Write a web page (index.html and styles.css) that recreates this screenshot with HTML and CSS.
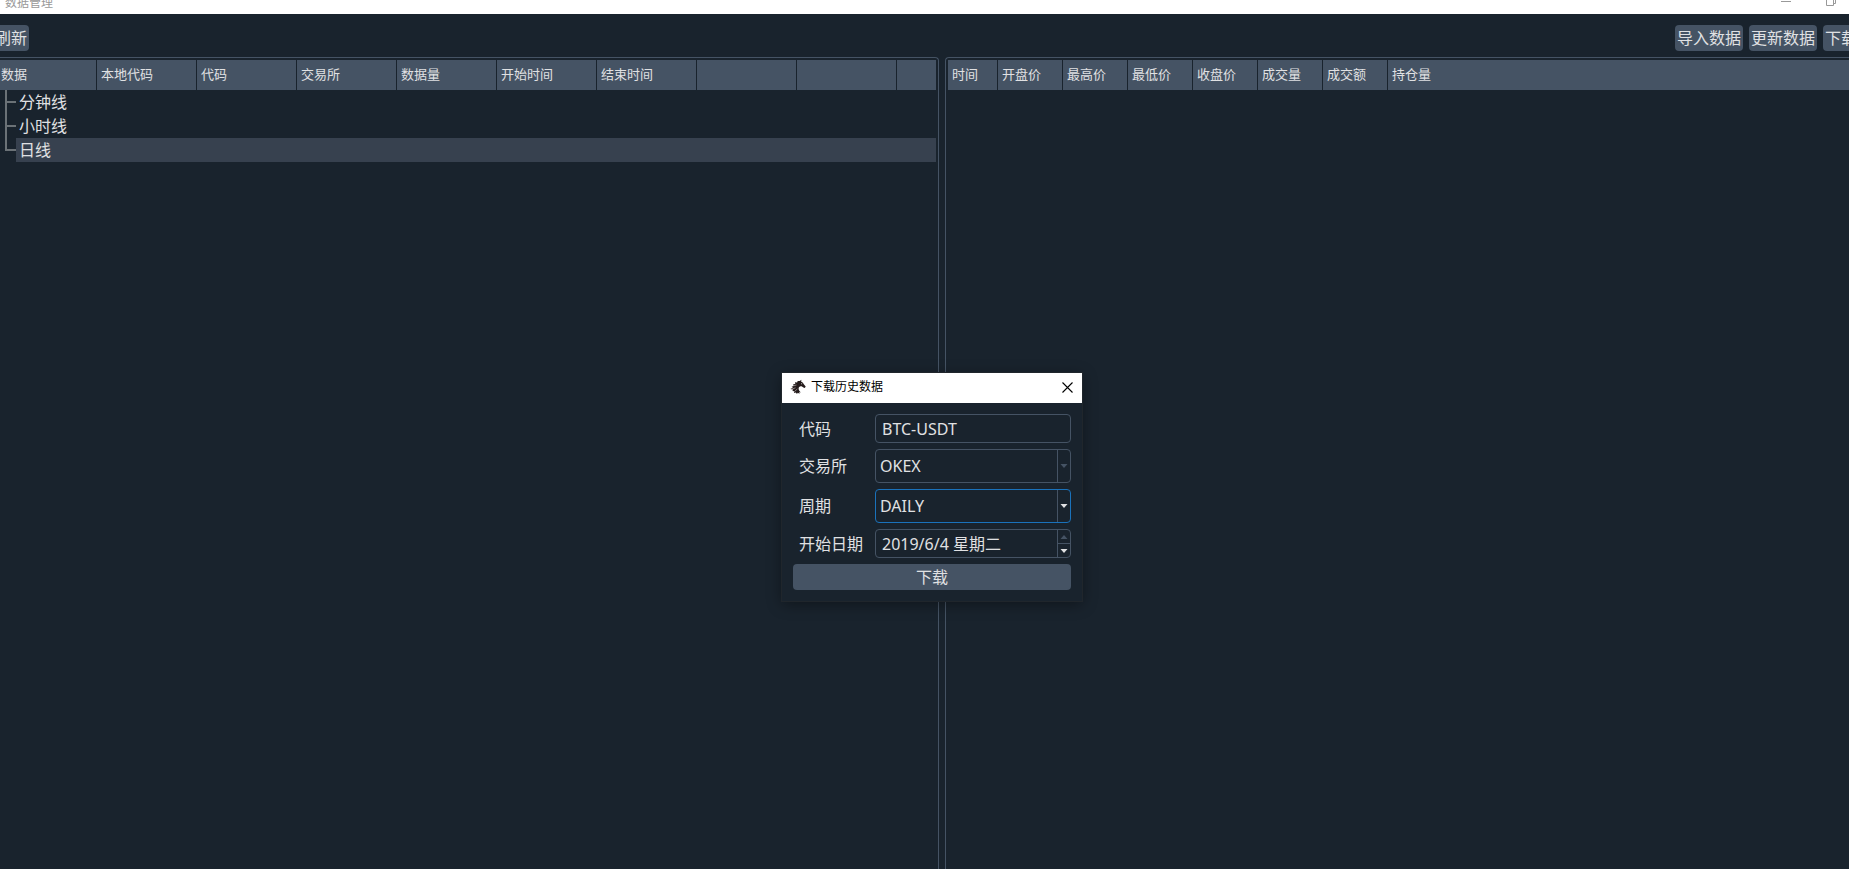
FILE: index.html
```html
<!DOCTYPE html>
<html lang="zh-CN">
<head>
<meta charset="utf-8">
<title>数据管理</title>
<link rel="stylesheet" href="styles.css">
</head>
<body>
<div class="window">
  <header class="titlebar">
    <span class="titlebar-text">数据管理</span>
    <div class="titlebar-controls">
      <button class="caption-btn" aria-label="最小化"><svg width="10" height="10" viewBox="0 0 10 10"><path d="M0 3.5H10" stroke="#999" fill="none"/></svg></button>
      <button class="caption-btn" aria-label="还原"><svg width="10" height="10" viewBox="0 0 10 10"><path d="M.5.5h7v7h-7zM7.500 5.500h2v-6" stroke="#999" fill="none"/></svg></button>
    </div>
  </header>
  <nav class="toolbar">
    <button class="btn">刷新</button>
    <div class="toolbar-group">
      <button class="btn">导入数据</button>
      <button class="btn">更新数据</button>
      <button class="btn">下载数据</button>
    </div>
  </nav>
  <main class="panes">
    <section class="pane pane-tree">
      <table class="grid">
        <colgroup><col class="col-first"><col class="col-tree" span="8"><col></colgroup>
        <thead><tr><th>数据</th><th>本地代码</th><th>代码</th><th>交易所</th><th>数据量</th><th>开始时间</th><th>结束时间</th><th></th><th></th><th></th></tr></thead>
        <tbody>
          <tr><td colspan="10"><div class="node"><svg class="branch" width="16" height="24" viewBox="0 0 16 24"><path d="M6 0V24M6 12H16"/></svg><span class="node-label">分钟线</span></div></td></tr>
          <tr><td colspan="10"><div class="node"><svg class="branch" width="16" height="24" viewBox="0 0 16 24"><path d="M6 0V24M6 12H16"/></svg><span class="node-label">小时线</span></div></td></tr>
          <tr><td colspan="10"><div class="node"><svg class="branch" width="16" height="24" viewBox="0 0 16 24"><path d="M6 0V12H16"/></svg><span class="node-label selected">日线</span></div></td></tr>
        </tbody>
      </table>
    </section>
    <section class="pane pane-bars">
      <table class="grid">
        <colgroup><col class="col-time"><col class="col-bar" span="6"><col></colgroup>
        <thead><tr><th>时间</th><th>开盘价</th><th>最高价</th><th>最低价</th><th>收盘价</th><th>成交量</th><th>成交额</th><th>持仓量</th></tr></thead>
      </table>
    </section>
  </main>
</div>

<div class="dialog" role="dialog" aria-labelledby="dialog-title">
  <div class="dialog-bar">
    <svg class="logo" width="16" height="16" viewBox="0 0 16 16"><path fill="#231a1a" d="M11.500 .8L11 2.400C12.500 3 13.400 4 13.800 5.200L15.700 7.600L14.800 9L13.400 8.600L11.600 7.300C10.400 7.300 9.300 7.700 8.700 8.700C8.200 10.300 9.300 12 11 13.600L9.300 13L9.500 14.700L7.700 13.700L7 15L5.800 13.500L4 14L4.300 12.300L2.300 12L3.300 10.600L.3 10.100L3 8.700L1.600 7.800L3.800 6.900L3.100 5.300L5.300 5.100L5 3.200L7.100 3.500L7.700 1.900L9.700 2.100Z"/><path d="M1.500 10.300L5.500 8.800M4.500 12.500L7.300 10M4 6.700L6.500 6" stroke="#b8aeae" stroke-width=".7"/><circle cx="11.700" cy="4.800" r=".5" fill="#fff"/></svg>
    <h1 class="dialog-title" id="dialog-title">下载历史数据</h1>
    <button class="close" aria-label="关闭"><svg width="11" height="11" viewBox="0 0 11 11"><path d="M.5.5l10 10M10.500.5l-10 10" stroke="#000" stroke-width="1.100" fill="none"/></svg></button>
  </div>
  <form class="form" onsubmit="return false">
    <label for="symbol">代码</label>
    <div class="field"><input class="control" id="symbol" type="text" value="BTC-USDT"></div>
    <label for="exchange">交易所</label>
    <div class="field field-combo">
      <select class="control" id="exchange"><option>OKEX</option></select>
      <span class="drop"><svg class="arrow dim" width="8" height="4" viewBox="0 0 8 4"><path d="M.5 0h7L4 4z"/></svg></span>
    </div>
    <label for="interval">周期</label>
    <div class="field field-combo active">
      <select class="control" id="interval"><option>DAILY</option></select>
      <span class="drop"><svg class="arrow" width="8" height="4" viewBox="0 0 8 4"><path d="M.5 0h7L4 4z"/></svg></span>
    </div>
    <label for="start">开始日期</label>
    <div class="field">
      <input class="control" id="start" type="text" value="2019/6/4 星期二">
      <div class="spin">
        <button type="button" aria-label="增加"><svg class="arrow dim" width="8" height="4" viewBox="0 0 8 4"><path d="M.5 4h7L4 0z"/></svg></button>
        <button type="button" aria-label="减少"><svg class="arrow" width="8" height="4" viewBox="0 0 8 4"><path d="M.5 0h7L4 4z"/></svg></button>
      </div>
    </div>
    <button class="btn submit">下载</button>
  </form>
</div>
</body>
</html>
```

FILE: styles.css
```css
:root {
  --bg: #19232d;
  --line: #455364;
  --text: #e0e1e3;
  --selected: #37414f;
  --accent: #1a72bb;
}

* {
  box-sizing: border-box;
}

body {
  margin: 0;
  overflow: hidden;
  background: var(--bg);
  color: var(--text);
  font: 16px/24px "Noto Sans", "Noto Sans CJK SC", sans-serif;
}

button,
input,
select {
  margin: 0;
  padding: 0;
  border: 0;
  background: none;
  color: inherit;
  font: inherit;
}

svg {
  display: block;
  flex: none;
}

.window {
  display: flex;
  flex-direction: column;
  height: 100vh;
  overflow: hidden;
}

.titlebar {
  display: flex;
  flex: none;
  align-items: center;
  justify-content: space-between;
  height: 22px;
  margin-top: -8px;
  padding-left: 5px;
  background: #fff;
  color: #999;
  font-size: 12px;
}

.titlebar-controls {
  display: flex;
}

.caption-btn {
  display: flex;
  align-items: center;
  width: 45px;
  height: 20px;
}

.caption-btn:last-child {
  width: 23px;
}

.toolbar {
  display: flex;
  flex: none;
  justify-content: space-between;
  padding: 11px 0 6px;
  margin: 0 -42px 0 -7px;
}

.toolbar-group {
  display: flex;
  gap: 6px;
}

.btn {
  height: 26px;
  padding: 0 2px;
  border-radius: 4px;
  background: var(--line);
  line-height: 26px;
  white-space: nowrap;
}

.panes {
  display: flex;
  flex: 1;
  gap: 6px;
}

.pane {
  min-width: 0;
  padding-top: 2px;
  border-top: 1px solid var(--line);
}

.pane-tree {
  flex: 939 1 0;
  padding-right: 2px;
  border-right: 1px solid var(--line);
  border-top-right-radius: 4px;
}

.pane-bars {
  flex: 904 1 0;
  padding-left: 2px;
  border-left: 1px solid var(--line);
  border-top-left-radius: 4px;
}

.grid {
  width: 100%;
  border-spacing: 0;
  table-layout: fixed;
}

.col-first {
  width: 97px;
}

.col-tree {
  width: 100px;
}

.col-time {
  width: 50px;
}

.col-bar {
  width: 65px;
}

.grid th {
  height: 30px;
  padding: 0 4px 2px;
  border-right: 1px solid var(--bg);
  background: var(--line);
  font-size: 13px;
  font-weight: 400;
  line-height: 20px;
  text-align: left;
  white-space: nowrap;
}

.pane-tree th:first-child {
  padding-left: 1px;
}

.grid th:last-child {
  border-right: 0;
}

.grid td {
  padding: 0;
}

.node {
  display: flex;
  height: 24px;
}

.branch path {
  fill: none;
  stroke: #6b7277;
  stroke-width: 2;
}

.node-label {
  flex: 1;
  padding-left: 3px;
}

.selected {
  background: var(--selected);
}

.dialog {
  position: absolute;
  top: 373px;
  left: 782px;
  width: 300px;
  background: var(--bg);
  box-shadow: 0 0 0 1px #20262c, 0 3px 14px rgba(0, 0, 0, 0.4);
}

.dialog-bar {
  display: flex;
  align-items: center;
  height: 30px;
  padding: 0 9px 2px 8px;
  background: #fff;
  color: #000;
}

.dialog-title {
  flex: 1;
  margin: 0 0 0 5px;
  font-size: 12px;
  font-weight: 400;
  line-height: 20px;
}

.form {
  display: grid;
  grid-template-columns: 76px 1fr;
  gap: 6px;
  align-items: center;
  padding: 11px;
}

.form label {
  padding-left: 6px;
  white-space: nowrap;
}

.field {
  display: flex;
  height: 29px;
  overflow: hidden;
  border: 1px solid var(--line);
  border-radius: 4px;
}

.field-combo {
  height: 34px;
}

.active {
  border-color: var(--accent);
}

.control {
  flex: 1;
  min-width: 0;
  padding-left: 6px;
  outline: 0;
  appearance: none;
}

.field-combo .control {
  padding-left: 4px;
}

.drop,
.spin {
  display: flex;
  flex: none;
  align-items: center;
  justify-content: center;
  width: 13px;
  border-left: 1px solid var(--line);
}

.spin {
  flex-direction: column;
  align-items: stretch;
}

.spin button {
  display: flex;
  flex: 1;
  align-items: center;
  justify-content: center;
}

.spin button + button {
  border-top: 1px solid var(--line);
}

.arrow {
  fill: var(--text);
}

.dim {
  fill: var(--line);
}

.submit {
  grid-column: 1 / -1;
}
```
